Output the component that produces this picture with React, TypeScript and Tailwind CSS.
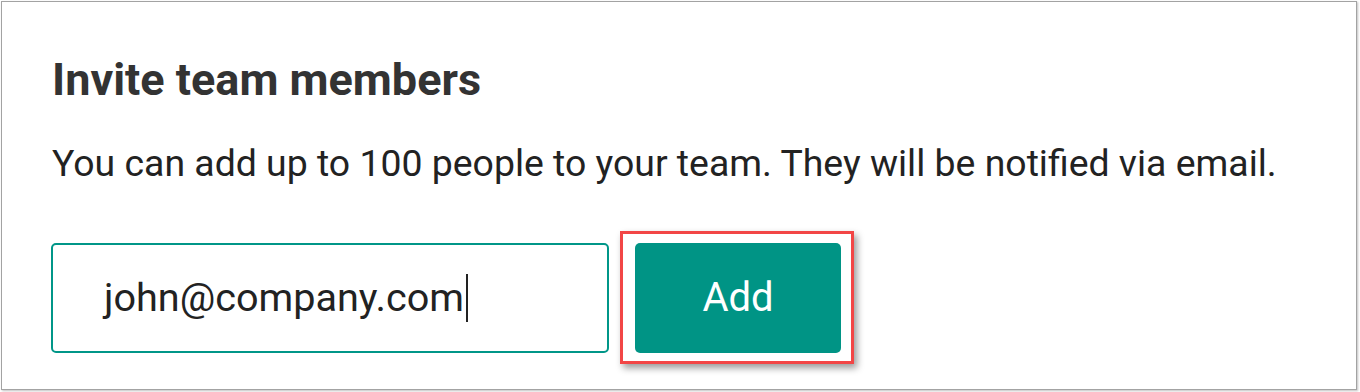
import React from "react";

export default function App() {
  return (
    <div className="w-[1360px] h-[392px] bg-white" style={{ fontFamily: "Roboto, 'Noto Sans', sans-serif" }}>
      <div className="ml-px mt-px w-[1356px] h-[389px] border border-[#a3a3a3] shadow-[1px_1px_2px_rgba(0,0,0,0.25)] bg-white pl-[49px] pt-[55px]">
        <h1 className="pl-[1px] text-[45px] leading-[45px] font-bold text-[#333333]">Invite team members</h1>
        <p className="pl-[1px] mt-[42px] text-[37.4px] leading-[38px] text-[#222222]">
          You can add up to 100 people to your team. They will be notified via email.
        </p>
        <div className="mt-[61px] flex items-start gap-[26px]">
          <div className="w-[558px] h-[110px] border-2 border-[#009688] rounded-[5px] flex items-center pl-[51px]">
            <span className="text-[39.6px] leading-[48px] text-[#222222]">john@company.com</span>
            <span className="ml-[2px] w-[2px] h-[48px] bg-[#222222]" />
          </div>
          <div className="relative">
            <div className="absolute left-[-15px] top-[-12px] right-[-13px] bottom-[-11px] border-[3px] border-[#f24646] shadow-[3px_4px_7px_rgba(0,0,0,0.4)]" />
            <button className="relative w-[206px] h-[110px] bg-[#009485] rounded-[5px] text-white text-[40px] leading-none">
              Add
            </button>
          </div>
        </div>
      </div>
    </div>
  );
}
